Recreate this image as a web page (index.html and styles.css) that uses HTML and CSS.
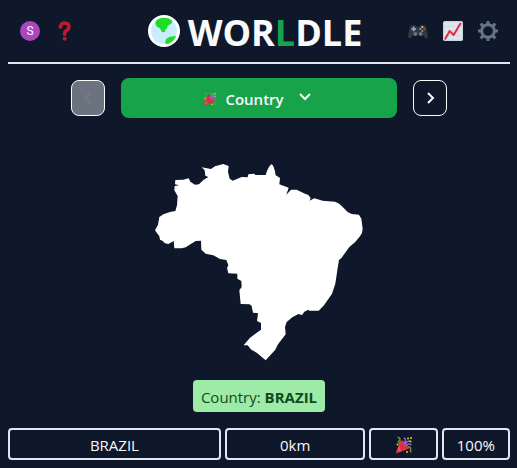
FILE: index.html
```html
<!DOCTYPE html>
<html lang="en">
<head>
<meta charset="utf-8">
<meta name="viewport" content="width=device-width, initial-scale=1">
<title>Worldle</title>
<link rel="stylesheet" href="styles.css">
</head>
<body>
<svg class="defs" aria-hidden="true">
  <symbol id="party" viewBox="0 0 36 36">
    <path d="M11 9 2 32c-1 2 1 3 3 2l23-9z" fill="#dd2e44"/>
    <path d="M11 9c0 9 8 18 17 16 1-7-12-20-17-16z" fill="#a51935"/>
    <path d="M11 9c5 0 14 8 17 16l-12 5C11 26 8 18 9 14z" fill="#dd2e44"/>
    <path d="M10 14 5 28l4 4 4-2C9 26 8 20 10 14z" fill="#ef5363"/>
    <path d="M5 3c6-1 6 5 3 7s0 5 3 4" fill="none" stroke="#5c9e36" stroke-width="3"/>
    <path d="M17 15c5-3 5-8 1-12M21 20c4-5 8-5 12-2" fill="none" stroke="#9268ca" stroke-width="3"/>
    <path d="M26 22c5-1 6 2 5 6s1 4 2 4" fill="none" stroke="#5c9e36" stroke-width="3"/>
    <path d="M19 17c3-6 7-7 11-7" fill="none" stroke="#8c70ce" stroke-width="3"/>
    <g fill="#f4c430"><circle cx="26" cy="5" r="2"/><circle cx="32" cy="4" r="2"/><circle cx="31" cy="11" r="2"/><circle cx="5" cy="17" r="2"/><circle cx="24" cy="32" r="2"/></g>
  </symbol>
</svg>
<div class="page">
  <header class="header">
    <nav class="tools">
      <button class="avatar" type="button" aria-label="Account">S</button>
      <button class="icon" type="button" aria-label="How to play">
        <svg width="20" height="20" viewBox="0 0 60 60"><path d="M16 18c1-8 6-12 13-12 8 0 13 5 13 12 0 10-13 10-13 19v3" fill="none" stroke="#be1931" stroke-width="11" stroke-linecap="round"/><circle cx="29" cy="53" r="6" fill="#be1931"/></svg>
      </button>
    </nav>
    <h1 class="title">
      <svg width="32" height="32" viewBox="0 0 96 96" aria-hidden="true">
        <circle cx="48" cy="48" r="48" fill="#fff"/><circle cx="48" cy="48" r="39" fill="#c8edff"/>
        <path d="M24 17C38 5 60 6 73 17L71 25 59 33 56 41 51 44 52 50 46 52 41 50 36 40 27 35 22 26zM55 71 66 65 84 63C80 76 70 85 56 87L51 82z" fill="#1fdd25"/>
      </svg>
      <span class="wordmark">WOR<span class="accent">L</span>DLE</span>
    </h1>
    <nav class="tools tools-end">
      <button class="icon" type="button" aria-label="More games">
        <svg width="20" height="20" viewBox="0 0 60 60">
          <path d="M12 13h10l4 4h8l4-4h10c5 0 7 6 8 13l4 19c1 8-7 9-11 3l-6-8H17l-6 8C7 54-1 53 0 45l4-19c1-7 3-13 8-13z" fill="#31373d"/>
          <path d="M10 24h14M17 17v14" stroke="#99aab5" stroke-width="5"/>
          <circle cx="22" cy="39" r="6" fill="#66757f"/><circle cx="38" cy="39" r="6" fill="#66757f"/>
          <circle cx="43" cy="18" r="3" fill="#ffcc4d"/><circle cx="49" cy="24" r="3" fill="#dd2e44"/><circle cx="37" cy="24" r="3" fill="#55acee"/><circle cx="43" cy="30" r="3" fill="#78b159"/>
        </svg>
      </button>
      <button class="icon" type="button" aria-label="Statistics">
        <svg width="20" height="20" viewBox="0 0 60 60">
          <rect width="60" height="60" rx="5" fill="#ccd6dd"/><rect x="4" y="4" width="52" height="52" fill="#e1e8ed"/>
          <path d="M4 16h52M4 30h52M4 44h52M16 4v52M30 4v52M44 4v52" stroke="#ccd6dd" stroke-width="2"/>
          <path d="M7 53 20 30 32 42 52 8" fill="none" stroke="#dd2e44" stroke-width="6" stroke-linecap="round" stroke-linejoin="round"/>
        </svg>
      </button>
      <button class="icon" type="button" aria-label="Settings">
        <svg width="20" height="20" viewBox="0 0 60 60" fill="none" stroke="#66757f">
          <circle cx="30" cy="30" r="19" stroke-width="9"/>
          <path d="M30 0v10M30 50v10M0 30h10M50 30h10M8 8l8 8M44 44l8 8M52 8l-8 8M16 44l-8 8" stroke-width="9"/>
        </svg>
      </button>
    </nav>
  </header>
  <main class="main">
    <div class="rounds">
      <button class="step" type="button" aria-label="Previous round" disabled><svg width="10" height="12" viewBox="0 0 10 12"><path d="M7 1 2 6l5 5"/></svg></button>
      <button class="round" type="button">
        <svg width="14" height="14" aria-hidden="true"><use href="#party"/></svg>
        <span>Country</span>
        <svg class="chevron" width="12" height="8" viewBox="0 0 12 8" aria-hidden="true"><path d="m1 1 5 5 5-5"/></svg>
      </button>
      <button class="step" type="button" aria-label="Next round"><svg width="10" height="12" viewBox="0 0 10 12"><path d="m3 1 5 5-5 5"/></svg></button>
    </div>
    <svg class="map" viewBox="465 491 624 590" role="img" aria-label="Outline of Brazil">
      <path fill="#fff" d="M465 690 474 673 478 650 490 642 510 635 526 632 531 615 533 587 523 570 524 557 537 555 525 552 526 539 550 538 566 534 571 544 585 553 597 552 610 539 625 530 616 526 614 510 605 501 633 506 645 498 670 491 686 497 684 515 689 535 698 541 725 530 743 531 745 522 762 520 767 524 797 524 801 512Q810 492 815 492Q822 494 827 525L840 533 838 552 866 562 859 583 873 568 890 568 915 580 925 584 932 593 929 601 943 594 968 601 1005 604Q1018 608 1025 617L1043 635 1055 641 1077 643 1084 655 1088 685Q1088 698 1080 708L1065 726 1048 740 1025 772 1017 779 1012 810 1006 850 996 880 972 915 956 931 928 931 925 928 913 934 906 944 895 941 877 951 860 965 855 980 857 1002 833 1033 826 1048 797 1080 770 1057 754 1048 743 1035 731 1035 750 1012 783 988 783 968 771 962 774 939 759 937 755 917 749 912 722 911 718 870 725 860 724 842 712 835 712 820 685 819 681 803 685 795 679 779 660 776 640 765 617 760 604 748 603 721 587 722 557 741 545 744 523 744 521 722 505 731 495 729 487 721 480 718 478 708z"/>
    </svg>
    <p class="answer">Country: <strong>BRAZIL</strong></p>
    <div class="guess">
      <div class="cell name">BRAZIL</div>
      <div class="cell distance">0km</div>
      <div class="cell"><svg width="18" height="18" role="img" aria-label="Correct"><use href="#party"/></svg></div>
      <div class="cell">100%</div>
    </div>
  </main>
</div>
</body>
</html>
```
FILE: styles.css
```css
* { box-sizing: border-box; }
body {
  margin: 0;
  background: #0f172a;
  color: #f8fafc;
  font: 15px/24px "Open Sans", "Noto Sans", sans-serif;
}
button {
  padding: 0;
  border: 0;
  background: none;
  color: inherit;
  font: inherit;
}
svg { display: block; }
.defs { position: absolute; width: 0; height: 0; }
.page { padding: 0 7px 0 8px; }
.header {
  display: grid;
  grid-template-columns: 1fr auto 1fr;
  align-items: center;
  height: 64px;
  padding: 0 12px;
  border-bottom: 2px solid #e2e8f0;
}
.tools { display: flex; gap: 15px; }
.tools-end { justify-content: flex-end; }
.avatar {
  width: 20px;
  height: 20px;
  border-radius: 50%;
  background: #ab47bc;
  font: 12px/20px Roboto, sans-serif;
}
.title {
  display: flex;
  align-items: center;
  gap: 8px;
  margin: 0;
  padding-right: 8px;
  font-size: 36px;
  line-height: 40px;
  font-weight: 700;
}
.wordmark { padding-top: 4px; margin-bottom: 0; }
.accent { color: #16a34a; }
.main { display: flex; flex-direction: column; align-items: center; }
.rounds {
  display: flex;
  align-items: center;
  justify-content: center;
  gap: 16px;
  width: 75%;
  margin-top: 14px;
}
.step {
  display: flex;
  align-items: center;
  justify-content: center;
  width: 34px;
  height: 36px;
  border: 1px solid #f8fafc;
  border-radius: 8px;
}
.step path, .chevron path { fill: none; stroke: currentColor; stroke-width: 2; }
.step:disabled { background: #6b7280; color: #7d7b78; }
.round {
  flex: 1;
  display: flex;
  align-items: center;
  justify-content: center;
  gap: 8px;
  height: 40px;
  padding: 2px 4px 0 0;
  border-radius: 8px;
  background: #16a34a;
  font-weight: 600;
}
.chevron { margin: 0 0 4px 7px; }
.map { width: 208px; margin-top: 46px; }
.answer {
  margin: 19px 0 16px;
  padding: 5px 8px 3px;
  border-radius: 4px;
  background: #9deba7;
  color: #0f4a1c;
}
.answer strong { font-weight: 700; }
.guess {
  display: grid;
  grid-template-columns: repeat(7, 1fr);
  gap: 4px;
  width: 100%;
}
.cell {
  display: flex;
  align-items: center;
  justify-content: center;
  height: 32px;
  padding-top: 2px;
  border: 2px solid #e2e8f0;
  border-radius: 4px;
}
.name { grid-column: span 3; }
.distance { grid-column: span 2; }
```
